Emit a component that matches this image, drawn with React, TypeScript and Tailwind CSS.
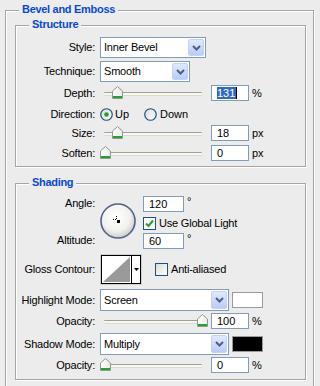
import type { ReactNode } from 'react';

const FONT = "font-['Liberation_Sans',Arial,sans-serif]";

function Group({ title, className, children }: { title: string; className: string; children: ReactNode }) {
  return (
    <div className={`relative border border-[#a5a5a5] shadow-[inset_1px_1px_0_#fff,1px_1px_0_#fff] ${className}`}>
      <span className="absolute -top-[8px] left-[13px] bg-[#ececec] px-[3px] text-[11px] font-bold leading-[13px] tracking-[-0.3px] text-[#0a48d6]">
        {title}
      </span>
      {children}
    </div>
  );
}

function Label({ children }: { children: ReactNode }) {
  return <span className="w-[79px] shrink-0 text-right leading-[13px] tracking-[-0.2px]">{children}</span>;
}

function Chevron() {
  return (
    <svg width="9" height="6" viewBox="0 0 9 6">
      <path d="M1 1 L4.5 4.5 L8 1" fill="none" stroke="#4d6185" strokeWidth="2" />
    </svg>
  );
}

function Select({ value, width, height = 'h-[21px]' }: { value: string; width: string; height?: string }) {
  return (
    <div className={`flex shrink-0 items-stretch border border-[#7f9db9] bg-white p-[1px] ${width} ${height}`}>
      <span className="flex flex-1 items-center pl-[2px] tracking-[-0.2px]">{value}</span>
      <span className="flex w-[16px] items-center justify-center rounded-[2px] border border-[#c3d3f8] bg-gradient-to-b from-[#e0e9fe] to-[#b9ccf8]">
        <Chevron />
      </span>
    </div>
  );
}

function Field({ children, width = 'w-[38px]' }: { children: ReactNode; width?: string }) {
  return (
    <div className={`flex h-[16px] shrink-0 items-center border border-[#7f9db9] bg-white pl-[5px] leading-[12px] ${width}`}>
      {children}
    </div>
  );
}

function Thumb({ className }: { className: string }) {
  return (
    <svg className={className} width="11" height="13" viewBox="0 0 11 13">
      <defs>
        <linearGradient id="tg" x1="0" y1="0" x2="1" y2="0">
          <stop offset="0" stopColor="#ffffff" />
          <stop offset="1" stopColor="#e6ece2" />
        </linearGradient>
      </defs>
      <path d="M0.5 5 L5.5 0.5 L10.5 5 V12.5 H0.5 Z" fill="url(#tg)" stroke="#8e9a8e" />
      <rect x="1" y="10" width="9" height="2" fill="#27a02f" />
    </svg>
  );
}

function Slider({ thumb }: { thumb: string }) {
  return (
    <div className="relative h-[16px] w-[107px] shrink-0">
      <div className="absolute left-[4px] right-[5px] top-[7px] h-[3px] rounded-[1px] border-t border-[#a1a098] bg-[#f7f6f0] shadow-[0_1px_0_#dcdbd2]" />
      <Thumb className={`absolute top-[1px] ${thumb}`} />
    </div>
  );
}

function Radio({ checked }: { checked?: boolean }) {
  return (
    <svg width="13" height="13" viewBox="0 0 13 13" className="shrink-0">
      <defs>
        <linearGradient id="rg" x1="0" y1="0" x2="1" y2="1">
          <stop offset="0" stopColor="#dcdcd4" />
          <stop offset="1" stopColor="#ffffff" />
        </linearGradient>
      </defs>
      <circle cx="6.5" cy="6.5" r="5.75" fill="url(#rg)" stroke="#1c5180" strokeWidth="1.2" />
      {checked ? <circle cx="6.5" cy="6.5" r="2.3" fill="#2aa12a" /> : null}
    </svg>
  );
}

function Checkbox({ checked }: { checked?: boolean }) {
  return (
    <span
      className={`flex h-[13px] w-[13px] shrink-0 items-center justify-center border border-[#1c5180] ${
        checked ? 'bg-white' : 'bg-gradient-to-br from-[#dcdcd5] to-[#ffffff]'
      }`}
    >
      {checked ? (
        <svg width="9" height="9" viewBox="0 0 9 9">
          <path d="M1 4.5 L3.5 7 L8 1.5" fill="none" stroke="#21a121" strokeWidth="2" />
        </svg>
      ) : null}
    </span>
  );
}

function Dial() {
  return (
    <svg width="37" height="37" viewBox="0 0 37 37" className="shrink-0">
      <defs>
        <radialGradient id="dg" cx="45%" cy="40%" r="60%">
          <stop offset="0" stopColor="#ffffff" />
          <stop offset="0.65" stopColor="#f2f2f0" />
          <stop offset="1" stopColor="#cdcdcd" />
        </radialGradient>
      </defs>
      <circle cx="18" cy="18" r="17" fill="url(#dg)" stroke="#53628a" strokeWidth="1.6" />
      <rect x="16" y="13" width="1" height="1" fill="#000" />
      <rect x="16" y="15" width="1" height="1" fill="#000" />
      <rect x="13" y="16" width="1" height="1" fill="#000" />
      <rect x="15" y="16" width="1" height="1" fill="#000" />
      <rect x="17" y="17" width="3" height="3" fill="#000" />
    </svg>
  );
}

function Contour() {
  return (
    <svg width="42" height="31" viewBox="0 0 42 31" className="shrink-0">
      <rect x="0.5" y="0.5" width="41" height="30" fill="#fff" stroke="#cfcfcf" />
      <rect x="1.5" y="1.5" width="39" height="28" fill="#fff" stroke="#000" />
      <path d="M3 28 L30 3 V28 Z" fill="#9a9a9a" />
      <path d="M31.5 2 V29" stroke="#000" />
      <path d="M34 14 H39 L36.5 17 Z" fill="#000" />
    </svg>
  );
}

function Swatch({ color }: { color: string }) {
  return <span className={`ml-[3px] h-[16px] w-[31px] shrink-0 border border-[#9b9b9b] ${color}`} />;
}

export default function App() {
  return (
    <div className={`h-[386px] w-[320px] overflow-hidden bg-[#ececec] pl-[5px] pt-[10px] text-[11px] text-black ${FONT}`}>
      <Group title="Bevel and Emboss" className="h-[400px] w-[309px] pl-[9px] pt-[14px]">
        <Group title="Structure" className="h-[142px] w-[291px] pt-[11px]">
          <div className="flex h-[21px] items-center">
            <Label>Style:</Label>
            <div className="ml-[5px]">
              <Select value="Inner Bevel" width="w-[106px]" />
            </div>
          </div>
          <div className="mt-[3px] flex h-[21px] items-center">
            <Label>Technique:</Label>
            <div className="ml-[5px]">
              <Select value="Smooth" width="w-[90px]" />
            </div>
          </div>
          <div className="mt-[3px] flex h-[16px] items-center">
            <Label>Depth:</Label>
            <div className="ml-[5px] flex items-center">
              <Slider thumb="left-[12px]" />
              <div className="ml-[4px]">
                <Field>
                  <span className="bg-[#316ac5] pr-[1px] text-white">131</span>
                  <span className="h-[12px] w-px bg-black" />
                </Field>
              </div>
              <span className="ml-[3px]">%</span>
            </div>
          </div>
          <div className="mt-[5px] flex h-[16px] items-center">
            <Label>Direction:</Label>
            <div className="ml-[5px] flex items-center">
              <div className="flex w-[44px] items-center">
                <Radio checked />
                <span className="ml-[2px]">Up</span>
              </div>
              <Radio />
              <span className="ml-[3px]">Down</span>
            </div>
          </div>
          <div className="mt-[3px] flex h-[16px] items-center">
            <Label>Size:</Label>
            <div className="ml-[5px] flex items-center">
              <Slider thumb="left-[12px]" />
              <div className="ml-[4px]">
                <Field>18</Field>
              </div>
              <span className="ml-[3px]">px</span>
            </div>
          </div>
          <div className="mt-[4px] flex h-[16px] items-center">
            <Label>Soften:</Label>
            <div className="ml-[5px] flex items-center">
              <Slider thumb="left-0" />
              <div className="ml-[4px]">
                <Field>0</Field>
              </div>
              <span className="ml-[3px]">px</span>
            </div>
          </div>
        </Group>

        <Group title="Shading" className="mt-[16px] h-[197px] w-[291px] pt-[12px]">
          <div className="flex h-[53px]">
            <div className="flex w-[79px] shrink-0 flex-col justify-between pb-[2px] pt-[1px]">
              <Label>Angle:</Label>
              <Label>Altitude:</Label>
            </div>
            <div className="ml-[5px] mt-[7px]">
              <Dial />
            </div>
            <div className="ml-[6px] flex flex-col">
              <div className="flex items-start">
                <Field width="w-[41px]">120</Field>
                <span className="ml-[3px] leading-[10px]">°</span>
              </div>
              <div className="mt-[5px] flex h-[13px] items-center">
                <Checkbox checked />
                <span className="ml-[3px] tracking-[-0.2px]">Use Global Light</span>
              </div>
              <div className="mt-[3px] flex items-start">
                <Field width="w-[41px]">60</Field>
                <span className="ml-[3px] leading-[10px]">°</span>
              </div>
            </div>
          </div>
          <div className="mt-[5px] flex h-[30px] items-center">
            <Label>Gloss Contour:</Label>
            <div className="ml-[5px] flex items-center">
              <Contour />
              <span className="ml-[13px]">
                <Checkbox />
              </span>
              <span className="ml-[3px] tracking-[-0.2px]">Anti-aliased</span>
            </div>
          </div>
          <div className="mt-[5px] flex h-[22px] items-center">
            <Label>Highlight Mode:</Label>
            <div className="ml-[5px] flex items-center">
              <Select value="Screen" width="w-[129px]" height="h-[22px]" />
              <Swatch color="bg-white" />
            </div>
          </div>
          <div className="mt-[2px] flex h-[16px] items-center">
            <Label>Opacity:</Label>
            <div className="ml-[5px] flex items-center">
              <Slider thumb="left-[97px]" />
              <div className="ml-[4px]">
                <Field>100</Field>
              </div>
              <span className="ml-[3px]">%</span>
            </div>
          </div>
          <div className="mt-[4px] flex h-[22px] items-center">
            <Label>Shadow Mode:</Label>
            <div className="ml-[5px] flex items-center">
              <Select value="Multiply" width="w-[129px]" height="h-[22px]" />
              <Swatch color="bg-black" />
            </div>
          </div>
          <div className="mt-[2px] flex h-[16px] items-center">
            <Label>Opacity:</Label>
            <div className="ml-[5px] flex items-center">
              <Slider thumb="left-0" />
              <div className="ml-[4px]">
                <Field>0</Field>
              </div>
              <span className="ml-[3px]">%</span>
            </div>
          </div>
        </Group>
      </Group>
    </div>
  );
}
